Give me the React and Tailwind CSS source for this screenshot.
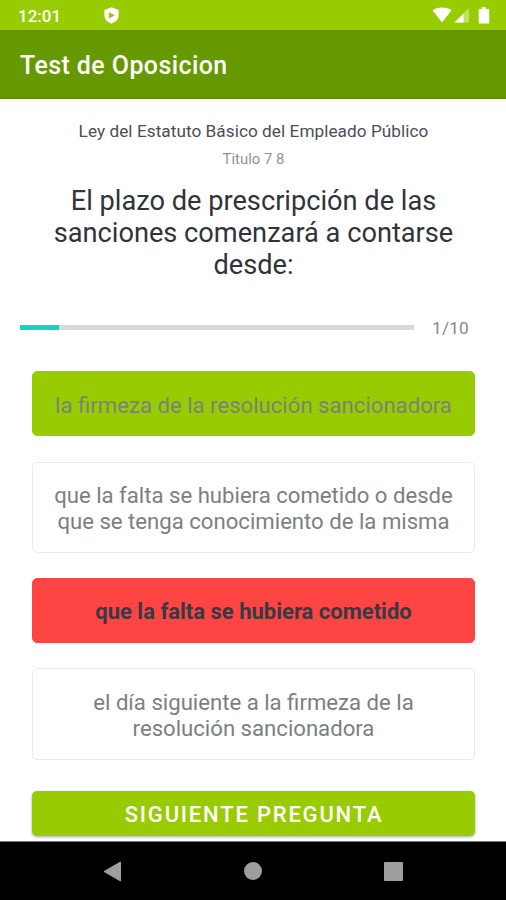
import { useState } from "react";

const question = {
  law: "Ley del Estatuto Básico del Empleado Público",
  title: "Titulo 7 8",
  lines: ["El plazo de prescripción de las", "sanciones comenzará a contarse", "desde:"],
  answers: [
    { lines: ["la firmeza de la resolución sancionadora"] },
    { lines: ["que la falta se hubiera cometido o desde", "que se tenga conocimiento de la misma"] },
    { lines: ["que la falta se hubiera cometido"] },
    { lines: ["el día siguiente a la firmeza de la", "resolución sancionadora"] },
  ],
  correct: 0,
};

function StatusBar() {
  return (
    <div className="h-[30px] shrink-0 bg-[#99cc00] flex items-center pl-[18px] pr-[16px] text-white">
      <span className="w-[86px] pt-[3px] text-[17px] leading-none font-medium">12:01</span>
      <svg className="w-[15px] h-[17px]" viewBox="0 0 15 17">
        <path
          fillRule="evenodd"
          fill="#fff"
          d="M7.5 0.2 14.6 3v5.5c0 3.7-3 6.8-7.1 8.1C3.4 15.3 0.4 12.2 0.4 8.5V3ZM5 5.2v6.2L11 8.3Z"
        />
      </svg>
      <div className="flex-1" />
      {/* Wifi, signal, battery */}
      <svg className="w-[20px] h-[16px]" viewBox="0 0 20 16">
        <path fill="#fff" d="M0.5 3.3C5.5-0.4 14.5-0.4 19.5 3.3L10 15.5Z" />
      </svg>
      <svg className="ml-[2px] w-[16px] h-[16px]" viewBox="0 0 16 16">
        <path fill="#fff" fillOpacity="0.4" d="M15 1v14.5H0.5Z" />
        <path fill="#fff" d="M9.5 6.5v9h-9Z" />
      </svg>
      <svg className="ml-[8px] w-[12px] h-[17px]" viewBox="0 0 12 17">
        <path fill="#fff" d="M3.5 0.3h4.5v1.7h3.2v14.5H0.7V2h2.8Z" />
      </svg>
    </div>
  );
}

function Answer({ answer, state, onClick }) {
  const colors = {
    idle: "bg-white border-[#ebebec] text-[#7b7f83] text-[22.15px]",
    correct: "bg-[#99cc00] border-[#99cc00] text-[#7b8378] text-[22.15px]",
    wrong: "bg-[#ff4444] border-[#ff4444] text-[#363a43] text-[22px] font-bold",
  };

  return (
    <button
      onClick={onClick}
      className={`w-full rounded-[5px] border pt-[19.5px] pb-[17.7px] text-center leading-[26px] ${colors[state]}`}
    >
      {answer.lines.map((line) => (
        <span key={line} className="block whitespace-nowrap">
          {line}
        </span>
      ))}
    </button>
  );
}

function NavigationBar() {
  return (
    <div className="h-[59px] shrink-0 bg-black border-t border-[#777] flex items-center justify-between pl-[103px] pr-[103px]">
      <svg className="w-[19px] h-[21px]" viewBox="0 0 19 21">
        <path fill="#9e9e9e" stroke="#9e9e9e" strokeLinejoin="round" d="M1 10.5 17.5 1v19Z" />
      </svg>
      <div className="w-[18px] h-[18px] rounded-full bg-[#9e9e9e]" />
      <div className="w-[19px] h-[19px] rounded-[1px] bg-[#9e9e9e]" />
    </div>
  );
}

export default function App() {
  const [selected, setSelected] = useState(2);
  const current = 1;
  const total = 10;

  const getState = (index) => {
    if (index === question.correct) return "correct";
    if (index === selected) return "wrong";
    return "idle";
  };

  return (
    <div className="w-[506px] h-[900px] overflow-hidden flex flex-col bg-white font-[Roboto,sans-serif]">
      <StatusBar />

      {/* Toolbar */}
      <header className="h-[69px] shrink-0 bg-[#669900] border-b border-[#5a8211] flex items-center pl-[20px] pt-[3px]">
        <h1 className="text-[25px] font-medium text-white tracking-[0.4px]">Test de Oposicion</h1>
      </header>

      <main className="flex-1 min-h-0 flex flex-col pt-[22px]">
        {/* Question */}
        <div className="pl-px text-center">
          <p className="text-[17.2px] leading-[20px] tracking-[0.05px] text-[#4b4e55]">{question.law}</p>
          <p className="mt-[9px] text-[14.9px] leading-[18px] text-[#919395]">{question.title}</p>
          <h2 className="mt-[17px] text-[27.2px] leading-[32px] text-[#2f333b]">
            {question.lines.map((line) => (
              <span key={line} className="block whitespace-nowrap">
                {line}
              </span>
            ))}
          </h2>
        </div>

        {/* Progress */}
        <div className="mt-[36px] flex items-center pl-[20px] h-[20px]">
          <div className="w-[394px] h-[5px] bg-[#d9d9d9]">
            <div className="h-full bg-[#14d3c0]" style={{ width: `${(current / total) * 100}%` }} />
          </div>
          <span className="ml-[18px] pt-[4px] text-[17.2px] tracking-[0.2px] text-[#85878a]">
            {current}/{total}
          </span>
        </div>

        {/* Answers */}
        <div className="mt-[34.3px] pl-[32px] pr-[31px] flex flex-col gap-[25.2px]">
          {question.answers.map((answer, index) => (
            <Answer
              key={index}
              answer={answer}
              state={getState(index)}
              onClick={() => setSelected(index)}
            />
          ))}
        </div>

        <button className="mt-[31.8px] ml-[32px] w-[443px] h-[45px] pt-[2px] pl-px shrink-0 rounded-[5px] bg-[#99cc00] text-white text-[22px] font-medium tracking-[1.8px] shadow-[0_1px_3px_rgba(0,0,0,0.35)]">
          SIGUIENTE PREGUNTA
        </button>
      </main>

      <NavigationBar />
    </div>
  );
}
